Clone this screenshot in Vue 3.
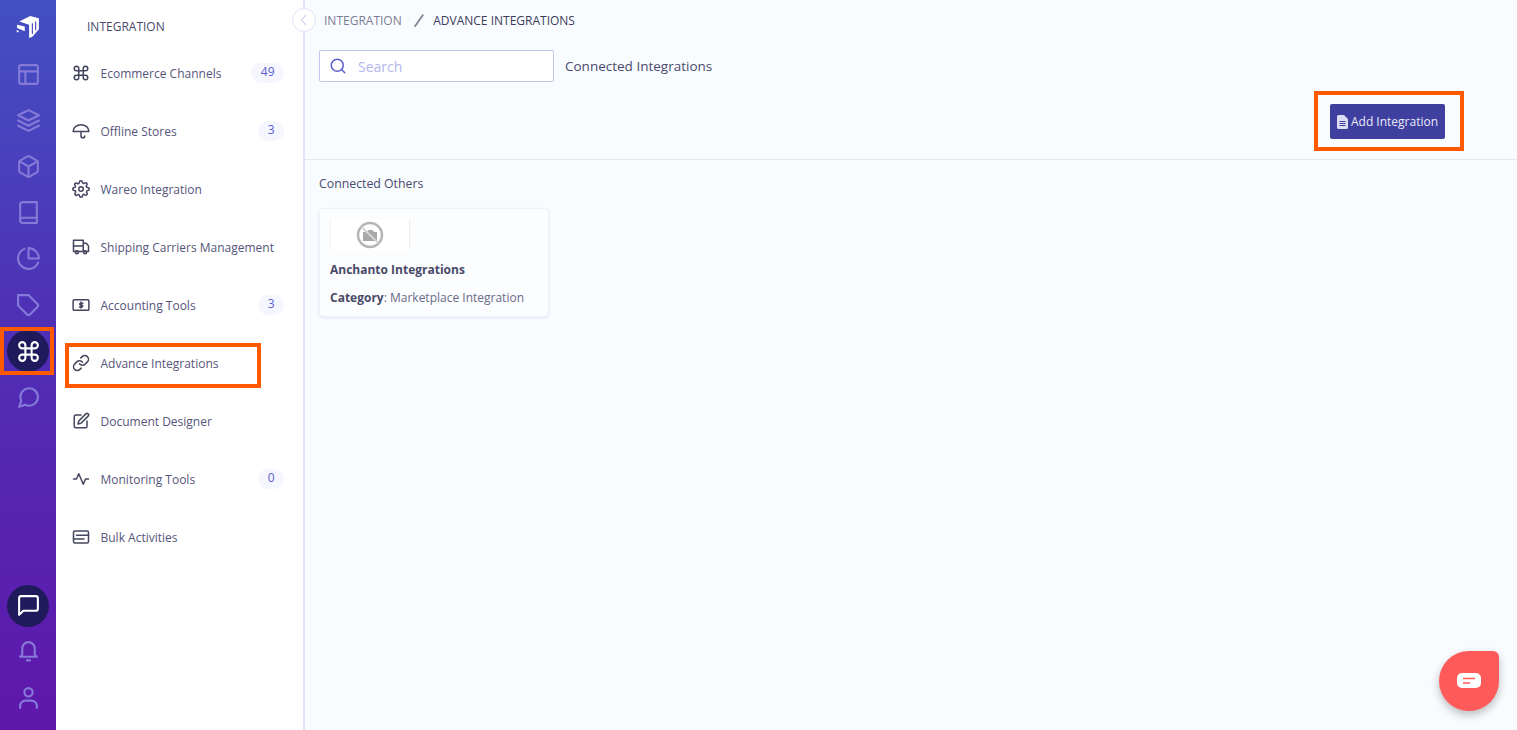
<script setup>
const rail = [
  { k: 'layout' }, { k: 'layers' }, { k: 'box' }, { k: 'book' }, { k: 'pie' }, { k: 'tag' },
  { k: 'command', active: true }, { k: 'chat' }
]
const railPaths = {
  layout: '<rect x="3" y="3" width="18" height="18" rx="2"/><path d="M3 9h18M9 21V9"/>',
  layers: '<path d="M12 2 2 7l10 5 10-5-10-5z"/><path d="m2 17 10 5 10-5M2 12l10 5 10-5"/>',
  box: '<path d="M21 16V8a2 2 0 0 0-1-1.730l-7-4a2 2 0 0 0-2 0l-7 4A2 2 0 0 0 3 8v8a2 2 0 0 0 1 1.730l7 4a2 2 0 0 0 2 0l7-4A2 2 0 0 0 21 16z"/><path d="M3.300 7 12 12l8.700-5M12 22V12"/>',
  book: '<path d="M4 19.500A2.500 2.500 0 0 1 6.500 17H20"/><path d="M6.500 2H20v20H6.500A2.500 2.500 0 0 1 4 19.500v-15A2.500 2.500 0 0 1 6.500 2z"/>',
  pie: '<path d="M21.200 15.900A10 10 0 1 1 8 2.800"/><path d="M22 12A10 10 0 0 0 12 2v10z"/>',
  tag: '<path d="M20.600 13.400 13.400 20.600a2 2 0 0 1-2.800 0L2 12V2h10l8.600 8.600a2 2 0 0 1 0 2.800z"/>',
  command: '<path d="M18 3a3 3 0 0 0-3 3v12a3 3 0 1 0 3-3H6a3 3 0 1 0 3 3V6a3 3 0 1 0-3 3h12a3 3 0 0 0 0-6z"/>',
  chat: '<path d="M21 11.500a8.400 8.400 0 0 1-12.300 7.400L3 21l2.100-5.700A8.400 8.400 0 1 1 21 11.500z"/>',
  square: '<path d="M21 15a2 2 0 0 1-2 2H7l-4 4V5a2 2 0 0 1 2-2h14a2 2 0 0 1 2 2z"/>',
  bell: '<path d="M18 15V9A6 6 0 0 0 6 9v6l-2 2h16zM10.500 20.500h3"/>',
  user: '<path d="M4 22v-2a5 5 0 0 1 5-5h6a5 5 0 0 1 5 5v2"/><circle cx="12" cy="7" r="4"/>'
}
const items = [
  { label: 'Ecommerce Channels', badge: '49', icon: railPaths.command },
  { label: 'Offline Stores', badge: '3', icon: '<path d="M1.500 12.500a10.500 9 0 0 1 21 0z"/><path d="M12 12.500v6a2.500 2.500 0 0 0 5 0"/>' },
  { label: 'Wareo Integration', icon: '<circle cx="12" cy="12" r="3"/><path d="M19.400 15a1.650 1.650 0 0 0 .33 1.820l.06.06a2 2 0 1 1-2.830 2.830l-.06-.06a1.650 1.650 0 0 0-2.800 1.170V21a2 2 0 1 1-4 0v-.09a1.650 1.650 0 0 0-2.800-1.120l-.06.06a2 2 0 1 1-2.830-2.830l.06-.06a1.650 1.650 0 0 0-1.170-2.800H3a2 2 0 1 1 0-4h.09a1.650 1.650 0 0 0 1.120-2.800l-.06-.06a2 2 0 1 1 2.830-2.830l.06.06a1.650 1.650 0 0 0 2.800-1.170V3a2 2 0 1 1 4 0v.09a1.650 1.650 0 0 0 2.800 1.120l.06-.06a2 2 0 1 1 2.830 2.830l-.06.06a1.650 1.650 0 0 0 1.170 2.800H21a2 2 0 1 1 0 4h-.09a1.650 1.650 0 0 0-1.510 1.160z"/>' },
  { label: 'Shipping Carriers Management', icon: '<path d="M2 3h13v15H2zM15 7h4l3 3.500V18h-7z"/><path d="M2 10.500h13"/><circle cx="6.500" cy="19" r="2"/><circle cx="17.500" cy="19" r="2"/>' },
  { label: 'Accounting Tools', badge: '3', icon: '<rect x="1.500" y="5" width="21" height="14" rx="1.500"/><path d="M14.500 9.500h-3a1.250 1.250 0 0 0 0 2.500h1.500a1.250 1.250 0 0 1 0 2.500h-3M12 8v8"/>' },
  { label: 'Advance Integrations', icon: '<path d="M10 13a5 5 0 0 0 7.540.54l3-3a5 5 0 0 0-7.070-7.070l-1.720 1.710"/><path d="M14 11a5 5 0 0 0-7.540-.54l-3 3a5 5 0 0 0 7.070 7.070l1.710-1.710"/>' },
  { label: 'Document Designer', icon: '<path d="M12 4H5a2 2 0 0 0-2 2v13a2 2 0 0 0 2 2h13a2 2 0 0 0 2-2v-7"/><path d="M18.500 2.500a2.120 2.120 0 0 1 3 3L12 15l-4 1 1-4 9.500-9.500z"/>' },
  { label: 'Monitoring Tools', badge: '0', icon: '<path d="M22 12h-4l-3 7L9 5l-3 7H2"/>' },
  { label: 'Bulk Activities', icon: '<rect x="2" y="4" width="20" height="16" rx="2"/><path d="M6 9.500h16M2 14.500h14"/>' }
]
</script>

<template>
  <div class="app">
    <nav class="rail">
      <div class="logo">
        <svg width="24" height="24" viewBox="0 0 22 22" fill="#fff">
          <path d="M3 6 13 1l8 2v10l-6 7-3 1V9L3 6z"/>
          <path d="M1 9l7 1.500V15L1 12z"/>
          <circle cx="1.500" cy="15" r="1"/>
          <path d="M15 7.500v10M18 6v8" stroke="#4b42bb" stroke-width="1" fill="none"/>
        </svg>
      </div>
      <div v-for="r in rail" :key="r.k" class="rail-item" :class="{ active: r.active }">
        <span class="rail-disc">
          <svg width="25" height="25" viewBox="0 0 24 24" fill="none" stroke="currentColor" stroke-width="2" stroke-linecap="round" stroke-linejoin="round" v-html="railPaths[r.k]"></svg>
        </span>
      </div>
      <div class="rail-spacer"></div>
      <div class="rail-item active">
        <span class="rail-disc">
          <svg width="25" height="25" viewBox="0 0 24 24" fill="none" stroke="currentColor" stroke-width="2" stroke-linecap="round" stroke-linejoin="round" v-html="railPaths.square"></svg>
        </span>
      </div>
      <div class="rail-item">
        <span class="rail-disc">
          <svg width="25" height="25" viewBox="0 0 24 24" fill="none" stroke="currentColor" stroke-width="2" stroke-linecap="round" stroke-linejoin="round" v-html="railPaths.bell"></svg>
        </span>
      </div>
      <div class="rail-item last">
        <span class="rail-disc">
          <svg width="25" height="25" viewBox="0 0 24 24" fill="none" stroke="currentColor" stroke-width="2" stroke-linecap="round" stroke-linejoin="round" v-html="railPaths.user"></svg>
        </span>
      </div>
    </nav>

    <aside class="side">
      <div class="side-title">INTEGRATION</div>
      <ul class="side-list">
        <li v-for="it in items" :key="it.label" class="side-item">
          <svg class="side-icon" viewBox="0 0 24 24" fill="none" stroke="currentColor" stroke-width="2" stroke-linecap="round" stroke-linejoin="round" v-html="it.icon"></svg>
          <span class="side-label">{{ it.label }}</span>
          <span v-if="it.badge" class="badge">{{ it.badge }}</span>
        </li>
      </ul>
      <button class="collapse" aria-label="Collapse">
        <svg width="10" height="12" viewBox="0 0 10 12" fill="none" stroke="#d5d8f5" stroke-width="1.200"><path d="M7 1 2.500 6 7 11"/></svg>
      </button>
    </aside>

    <main class="main">
      <header class="head">
        <div class="crumbs">
          <span class="crumb">INTEGRATION</span>
          <span class="slash"></span>
          <span class="crumb current">ADVANCE INTEGRATIONS</span>
        </div>
        <div class="tools">
          <label class="search">
            <svg width="18" height="18" viewBox="0 0 24 24" fill="none" stroke="#5c5fd0" stroke-width="2" stroke-linecap="round"><circle cx="11" cy="11" r="8"/><path d="m21 21-4.300-4.300"/></svg>
            <span class="placeholder">Search</span>
          </label>
          <span class="tools-label">Connected Integrations</span>
        </div>
        <div class="actions">
          <button class="add">
            <svg width="11" height="14" viewBox="0 0 11 14" fill="#dcdcf2"><path d="M1.500 0H7l4 4v8.500a1.500 1.500 0 0 1-1.500 1.500h-8A1.500 1.500 0 0 1 0 12.500v-11A1.500 1.500 0 0 1 1.500 0z"/><path d="M2.500 6.500h6M2.500 8.500h6M2.500 10.500h6" stroke="#3f3fa0"/></svg>
            Add Integration
          </button>
        </div>
      </header>

      <section class="body">
        <h2 class="section-title">Connected Others</h2>
        <article class="card">
          <div class="thumb">
            <svg width="28" height="28" viewBox="0 0 28 28" fill="none">
              <circle cx="14" cy="14" r="12" stroke="#b5b5b5" stroke-width="2.500"/>
              <path d="M7 11h4l1.500-2h4l1.500 2h3v9H7z" fill="#a8a8a8"/>
              <path d="m5.500 6 17 16" stroke="#d4d4d4" stroke-width="2"/>
            </svg>
          </div>
          <h3 class="card-title">Anchanto Integrations</h3>
          <p class="card-meta"><b>Category</b>: Marketplace Integration</p>
        </article>
      </section>
    </main>

    <div class="mark mark-rail"></div>
    <div class="mark mark-side"></div>
    <div class="mark mark-add"></div>

    <div class="chat-widget">
      <svg width="26" height="19" viewBox="0 0 26 19">
        <path d="M6 1h14a5 5 0 0 1 5 5v5a5 5 0 0 1-5 5H6a5 5 0 0 1-5-5V6a5 5 0 0 1 5-5z" fill="#fff"/>
        <path d="M7 6.500h12M7 11h7" stroke="#ff5a5a" stroke-width="1.600"/>
      </svg>
    </div>
  </div>
</template>

<style>
html, body { margin: 0; overflow: hidden; }
</style>

<style scoped>
.app {
  display: flex;
  position: relative;
  width: 100%;
  height: 730px;
  overflow: hidden;
  font-family: "Open Sans", "Noto Sans", sans-serif;
  background: #f9fcff;
}
.rail {
  flex: 0 0 56px;
  display: flex;
  flex-direction: column;
  align-items: stretch;
  background: linear-gradient(180deg, #4350c3 0%, #4f2fb5 45%, #5f17ab 100%);
  color: #857ad8;
}
.logo {
  height: 51.500px;
  display: flex;
  align-items: center;
  justify-content: center;
  padding-top: 3px;
  box-sizing: border-box;
}
.rail-item {
  height: 46.100px;
  display: flex;
  align-items: center;
  justify-content: center;
  width: 56px;
}
.rail-item.last { margin-bottom: 9px; }
.rail-disc {
  width: 42px;
  height: 42px;
  border-radius: 50%;
  display: flex;
  align-items: center;
  justify-content: center;
}
.rail-item.active .rail-disc {
  background: #1f1a5c;
  color: #fff;
}
.rail-spacer { flex: 1; }
.side {
  flex: 0 0 247px;
  position: relative;
  background: #fff;
  border-right: 2px solid #e1e3fa;
}
.side-title {
  padding: 19px 0 0 31px;
  height: 25px;
  font-size: 12px;
  line-height: 16px;
  color: #4a4a6e;
}
.side-list {
  list-style: none;
  margin: 0;
  padding: 0;
}
.side-item {
  height: 58px;
  display: flex;
  align-items: center;
  padding: 0 19px 0 15.500px;
}
.side-icon {
  flex: none;
  color: #45455f;
  width: 18px;
  height: 18px;
}
.side-label {
  margin-left: 11px;
  font-size: 12px;
  color: #55557a;
  white-space: nowrap;
}
.badge {
  margin-left: auto;
  padding: 0 9.500px;
  height: 20px;
  line-height: 18px;
  border-radius: 10px;
  background: #f5f6fe;
  color: #5c5fd0;
  font-size: 12px;
  text-align: center;
}
.collapse {
  position: absolute;
  right: -13px;
  top: 8px;
  width: 24px;
  height: 24px;
  padding: 0;
  border: 1px solid #e1e3fa;
  border-radius: 50%;
  background: #fff;
  display: flex;
  align-items: center;
  justify-content: center;
}
.main { flex: 1; min-width: 0; display: flex; flex-direction: column; }
.head {
  height: 159px;
  border-bottom: 1px solid #e4e7f2;
  padding: 0 72px 0 14px;
}
.crumbs {
  height: 40px;
  display: flex;
  align-items: center;
  padding-left: 5px;
  font-size: 12px;
}
.crumb { color: #7d7d95; }
.crumb.current { color: #3c3c5a; }
.slash {
  width: 1.500px;
  height: 15px;
  margin: 0 14px 0 16px;
  background: #8a8a9c;
  transform: rotate(35deg);
}
.tools {
  margin-top: 10px;
  display: flex;
  align-items: center;
}
.search {
  width: 235px;
  height: 32px;
  box-sizing: border-box;
  border: 1px solid #c3c6f0;
  border-radius: 2px;
  background: #fff;
  display: flex;
  align-items: center;
  padding-left: 9px;
}
.placeholder {
  margin-left: 11px;
  font-size: 14px;
  color: #b4b6ee;
}
.tools-label {
  margin-left: 11px;
  font-size: 13.500px;
  color: #4a4a6e;
}
.actions {
  display: flex;
  justify-content: flex-end;
  margin-top: 22px;
}
.add {
  width: 115px;
  height: 35px;
  border: 0;
  border-radius: 2px;
  background: #3f3fa0;
  color: #e9e9f7;
  font-family: inherit;
  font-size: 12px;
  display: flex;
  align-items: center;
  justify-content: center;
  gap: 3px;
  padding: 0;
  white-space: nowrap;
}
.body { padding: 16px 15px 16px 14px; }
.section-title {
  margin: 0;
  font-size: 12.300px;
  font-weight: 400;
  line-height: 16px;
  color: #4a4a6e;
}
.card {
  margin-top: 16px;
  width: 230px;
  height: 109px;
  box-sizing: border-box;
  padding: 10px;
  background: #fbfdff;
  border: 1px solid #eef0fa;
  border-radius: 4px;
  box-shadow: 0 1px 3px rgba(80, 80, 160, 0.120);
}
.thumb {
  width: 80px;
  height: 31px;
  box-sizing: border-box;
  background: #fff;
  border-right: 1px solid #eeeeee;
  border-left: 1px solid #f2f2f2;
  display: flex;
  align-items: center;
  justify-content: center;
}
.card-title {
  margin: 12px 0 0;
  font-size: 12px;
  line-height: 16px;
  font-weight: 700;
  color: #4a4a68;
}
.card-meta {
  margin: 12px 0 0;
  font-size: 12px;
  line-height: 16px;
  color: #6a6a88;
  white-space: nowrap;
}
.card-meta b { color: #4a4a68; }
.mark {
  position: absolute;
  box-sizing: border-box;
  border: 4px solid #ff5a00;
  pointer-events: none;
}
.mark-rail { left: 0; top: 327px; width: 54px; height: 48px; }
.mark-side { left: 65px; top: 343px; width: 196px; height: 45px; }
.mark-add { left: 1314px; top: 91px; width: 150px; height: 60px; }
.chat-widget {
  position: absolute;
  left: 1439px;
  top: 651px;
  width: 60px;
  height: 60px;
  border-radius: 50% 6px 50% 50%;
  background: #ff5a5a;
  box-shadow: 0 4px 8px rgba(0, 0, 0, 0.250);
  display: flex;
  align-items: center;
  justify-content: center;
}
</style>
